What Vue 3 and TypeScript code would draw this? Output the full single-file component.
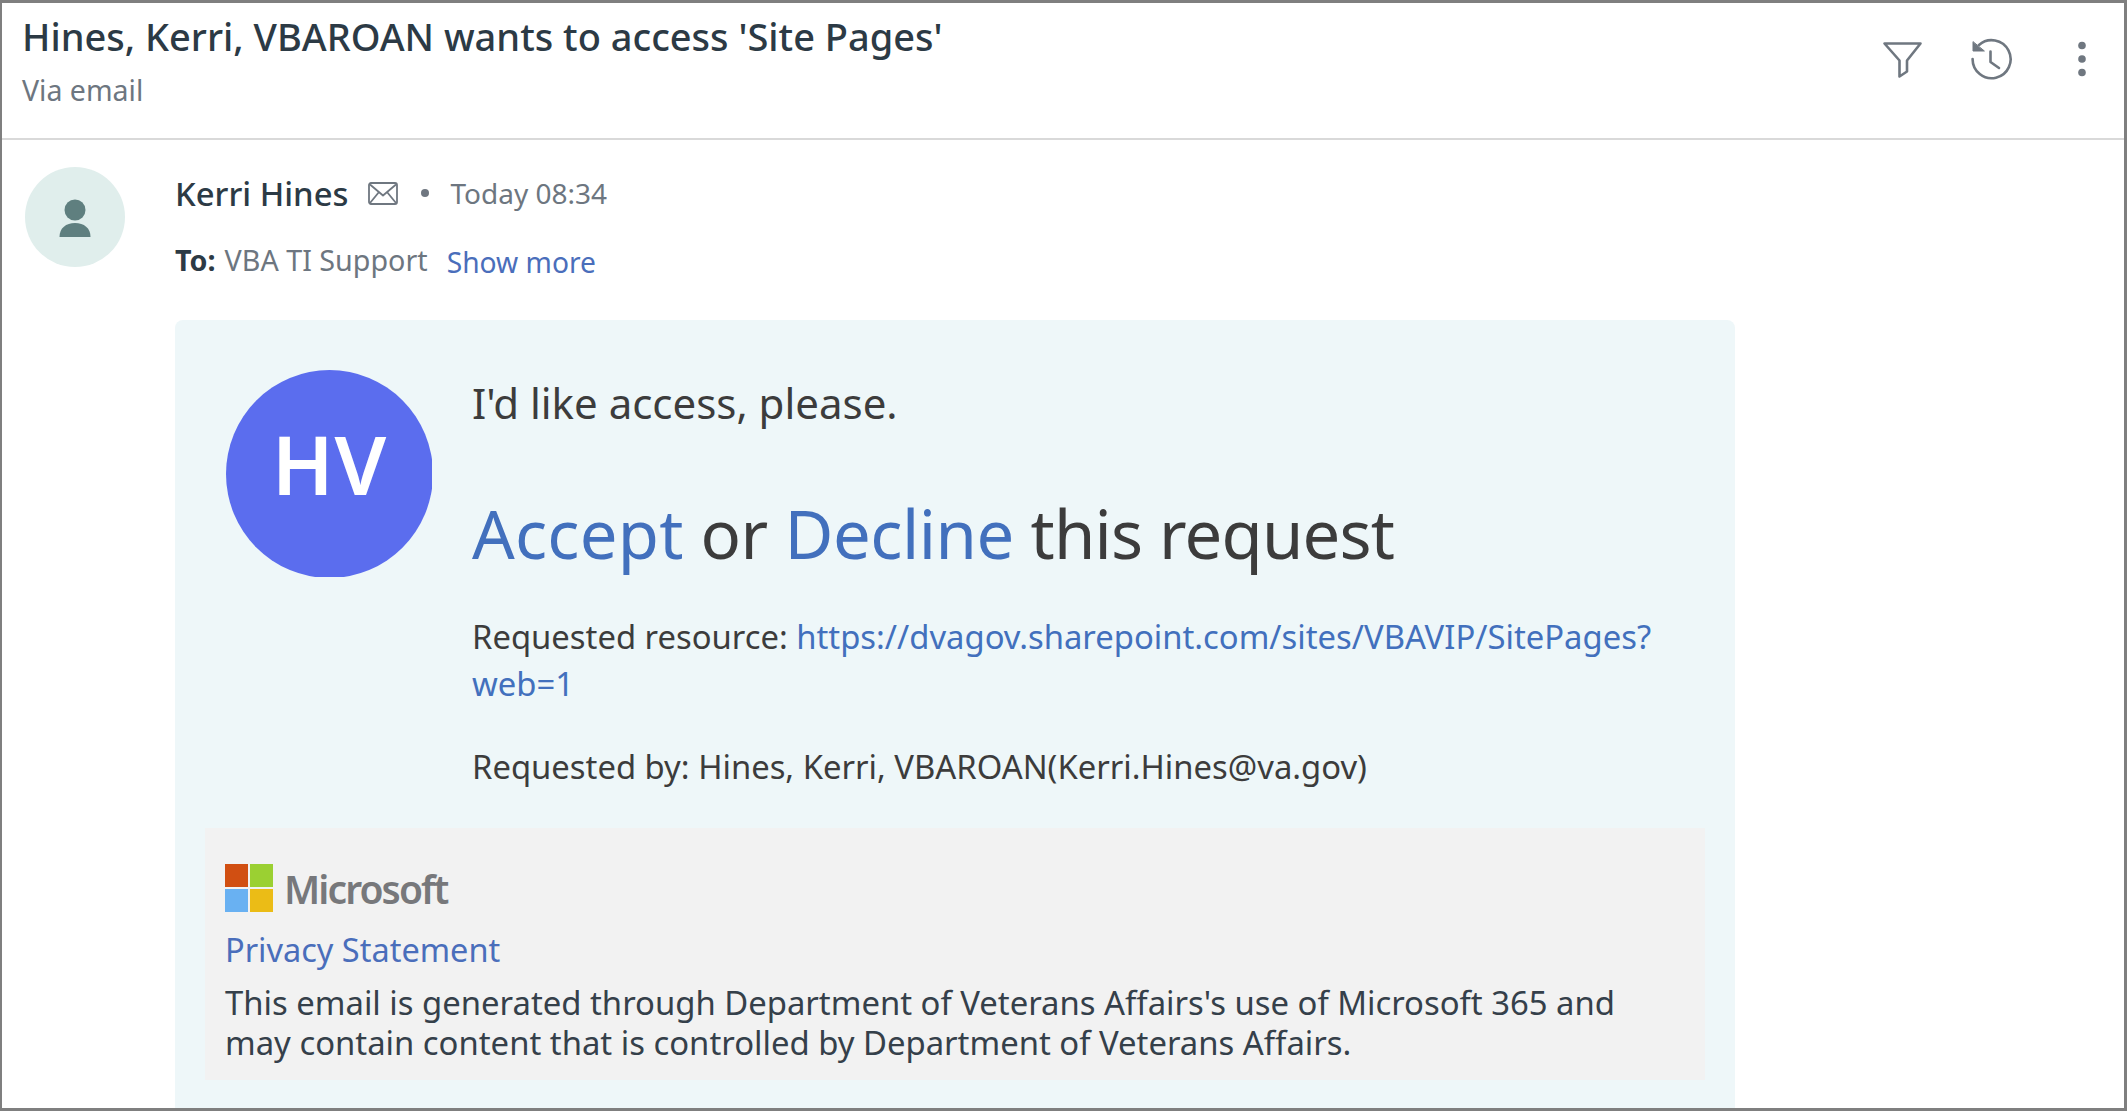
<script setup lang="ts">
const title = "Hines, Kerri, VBAROAN wants to access 'Site Pages'";
</script>

<template>
  <div class="frame">
    <header class="head">
      <div class="head-text">
        <h1>{{ title }}</h1>
        <p class="via">Via email</p>
      </div>
      <div class="tools">
        <svg class="i-filter" width="44" height="40" viewBox="0 0 44 40" fill="none" stroke="#6f7780" stroke-width="2.6" stroke-linejoin="round">
          <path d="M3.5 3.5H39.5L26 20.5V31.5L18.5 36.5V20.5Z" />
        </svg>
        <svg class="i-hist" width="46" height="44" viewBox="0 0 46 44" fill="none" stroke="#6f7780" stroke-width="2.6" stroke-linecap="round" stroke-linejoin="round">
          <path d="M3.6 22A19 19 0 1 0 10 8" />
          <path d="M4 5V14H15Z" fill="#6f7780" stroke-width="1" />
          <path d="M21.5 14.5V25L30 31" />
        </svg>
        <svg class="i-more" width="10" height="36" viewBox="0 0 10 36" fill="#6f7780">
          <circle cx="5" cy="4.5" r="3.8" /><circle cx="5" cy="18" r="3.8" /><circle cx="5" cy="31.5" r="3.8" />
        </svg>
      </div>
    </header>

    <main class="msg">
      <div class="avatar">
        <svg class="person" width="40" height="42" viewBox="0 0 40 42" fill="#5f7f7f">
          <circle cx="20" cy="11" r="10.5" />
          <path d="M4.5 38C4.5 29 11 24 20 24S35.5 29 35.5 38Z" />
        </svg>
      </div>
      <div class="body">
        <div class="from">
          <span class="name">Kerri Hines</span>
          <svg class="mail" width="30" height="23" viewBox="0 0 30 23" fill="none" stroke="#6f7780" stroke-width="1.8" stroke-linejoin="round">
            <rect x="1" y="1" width="28" height="21" rx="2" />
            <path d="M2 2.5L15 13.5L28 2.5M2 21L11 10M28 21L19 10" />
          </svg>
          <span class="dot"></span>
          <span class="time">Today 08:34</span>
        </div>
        <div class="to">
          <b>To:</b> <span class="rcpt">VBA TI Support</span>
          <a class="more">Show more</a>
        </div>
        <section class="card">
          <div class="request">
            <div class="hv"><span>HV</span></div>
            <div class="req-text">
              <p class="please">I'd like access, please.</p>
              <p class="action"><a class="accept">Accept</a> or <a>Decline</a> <span class="rest">this request</span></p>
              <p class="res">Requested resource: <a>https://dvagov.sharepoint.com/sites/VBAVIP/SitePages?<wbr />web=1</a></p>
              <p class="by">Requested by: Hines, Kerri, VBAROAN(Kerri.Hines@va.gov)</p>
            </div>
          </div>
          <div class="foot">
            <div class="ms">
              <span class="logo"><i class="r"></i><i class="g"></i><i class="b"></i><i class="y"></i></span>
              <span class="ms-word">Microsoft</span>
            </div>
            <a class="privacy">Privacy Statement</a>
            <p class="legal">This email is generated through Department of Veterans Affairs's use of Microsoft 365 and may contain content that is controlled by Department of Veterans Affairs.</p>
          </div>
        </section>
      </div>
    </main>
  </div>
</template>

<style>
html, body { margin: 0; background: #fff; overflow: hidden; }
</style>

<style scoped>
.frame {
  box-sizing: border-box;
  width: 2127px;
  height: 1111px;
  border: 3px solid #7f7f7f;
  border-left-width: 2px;
  background: #fff;
  font-family: "Noto Sans", sans-serif;
  overflow: hidden;
  display: flex;
  flex-direction: column;
}
p, h1 { margin: 0; }
a { color: #4270bd; }
.head {
  flex: none;
  height: 137px;
  box-sizing: border-box;
  border-bottom: 2px solid #d9d9d9;
  padding: 10px 0 0 20px;
  display: flex;
  justify-content: space-between;
}
h1 {
  font-size: 38px;
  line-height: 46px;
  font-weight: 500;
  color: #2c3a45;
}
.via {
  margin-top: 12px;
  font-size: 28.5px;
  line-height: 38px;
  color: #6d7680;
}
.tools {
  display: flex;
  align-items: flex-start;
  padding: 24px 37px 0 0;
}
.i-filter { margin-top: 3px; }
.i-hist { margin-left: 44px; }
.i-more { margin-left: 62px; margin-top: 3.5px; }

.msg {
  flex: 1;
  min-height: 0;
  display: flex;
  padding: 27px 0 0 23px;
}
.avatar {
  flex: none;
  width: 100px;
  height: 100px;
  border-radius: 50%;
  background: #e0eeec;
  display: flex;
  align-items: center;
  justify-content: center;
}
.person { margin-top: 6px; }
.body { margin-left: 50px; width: 1560px; display: flex; flex-direction: column; min-height: 0; }
.from {
  display: flex;
  align-items: center;
  height: 48px;
  margin-top: 2px;
}
.name { font-size: 32.8px; color: #2c3a45; font-weight: 500; }
.mail { margin-left: 20px; }
.dot { width: 8px; height: 8px; border-radius: 50%; background: #6f7780; margin-left: 23px; }
.time { font-size: 28px; color: #6d7680; margin-left: 21px; }
.to {
  margin-top: 23px;
  display: flex;
  align-items: baseline;
  height: 48px;
  font-size: 28.7px;
}
.to b { color: #2c3a45; font-weight: 700; }
.rcpt { color: #6d7680; margin-left: 9px; }
.more { margin-left: 19px; color: #4a6ebb; font-size: 28.2px; position: relative; top: 2px; }
.card {
  flex: 1;
  margin-top: 32px;
  background: #eef7f9;
  border-radius: 8px 8px 0 0;
  padding: 50px 30px 0;
  width: 1560px;
  box-sizing: border-box;
}
.request { display: flex; }
.hv {
  flex: none;
  width: 207px;
  height: 208px;
  margin-left: 21px;
  border-radius: 50%;
  background: #5b6dee;
  color: #fff;
  font-size: 82px;
  font-weight: 600;
  letter-spacing: 1px;
  display: flex;
  align-items: center;
  justify-content: center;
  clip-path: inset(0 1px 1px 0);
}
.hv span { position: relative; top: -11px; }
.req-text { margin-left: 39px; color: #3c3c3c; }
.please { font-size: 42px; line-height: 60px; margin-top: 3px; }
.action { font-size: 67px; line-height: 92px; margin-top: 54px; letter-spacing: -0.5px; }
.accept { letter-spacing: 0.2px; }
.rest { letter-spacing: -0.8px; }
.res { font-size: 32.8px; line-height: 47px; margin-top: 34px; width: 1210px; }
.by { font-size: 32.8px; line-height: 47px; margin-top: 36px; }
.foot {
  margin-top: 38px;
  background: #f2f2f2;
  height: 252px;
  box-sizing: border-box;
  padding: 36px 20px 0;
}
.ms { display: flex; align-items: center; height: 48px; }
.logo { display: grid; grid-template-columns: 23px 23px; grid-auto-rows: 23px; gap: 2px; }
.logo i { display: block; }
.r { background: #d14f12; }
.g { background: #9bd032; }
.b { background: #69b1f2; }
.y { background: #ebbc16; }
.ms-word { margin-left: 11px; font-size: 39px; font-weight: 600; color: #77787b; letter-spacing: -1.9px; }
.privacy { display: block; font-size: 32.5px; line-height: 46px; margin-top: 15px; color: #4a6ebb; }
.legal { font-size: 32.85px; line-height: 40px; color: #35404a; margin-top: 10px; width: 1440px; }
</style>
